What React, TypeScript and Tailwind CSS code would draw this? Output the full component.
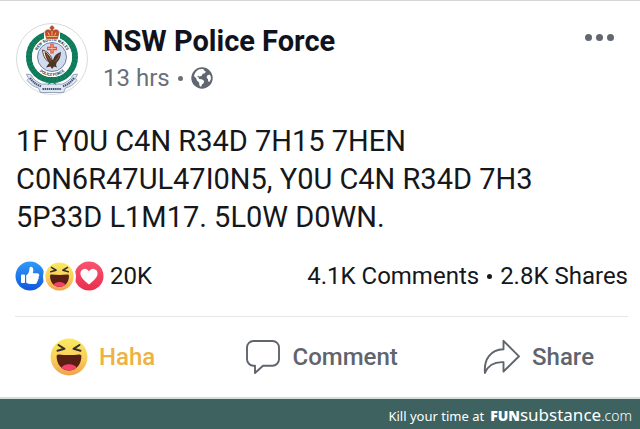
import React from "react";

const HahaIcon = ({ className, id }: { className: string; id: string }) => (
  <svg viewBox="0 0 38 38" className={className} aria-hidden="true">
    <defs>
      <linearGradient id={id} x1="0" y1="0" x2="0" y2="1">
        <stop offset="0" stopColor="#fbe960" />
        <stop offset="0.55" stopColor="#f8cf5c" />
        <stop offset="1" stopColor="#f2a04c" />
      </linearGradient>
    </defs>
    <circle cx="19" cy="19" r="18.5" fill={`url(#${id})`} />
    <path
      d="M8.500 7 14.500 10.800 7.500 12.800M29.500 7 23.500 10.800 30.500 12.800"
      fill="none"
      stroke="#33302c"
      strokeWidth="2"
      strokeLinecap="round"
      strokeLinejoin="round"
    />
    <path
      d="M6.600 18.200C6.600 17 7.400 16.300 8.700 16.400c6.800.8 13.800.8 20.600 0 1.300-.1 2.100.6 2.100 1.800C31.400 26 26.500 32.500 19 32.500S6.600 26 6.600 18.200z"
      fill="#5a1f13"
    />
    <path
      d="M11.500 29.800c.8-2.300 3.800-3.500 7.500-3.500s6.700 1.200 7.500 3.500c-2 1.800-4.500 2.700-7.500 2.700s-5.500-.9-7.500-2.700z"
      fill="#f4416a"
    />
  </svg>
);

const LikeIcon = () => (
  <svg viewBox="0 0 30 30" className="size-[30px]" aria-hidden="true">
    <defs>
      <linearGradient id="like" x1="0" y1="0" x2="0" y2="1">
        <stop offset="0" stopColor="#2f9af8" />
        <stop offset="1" stopColor="#1257dc" />
      </linearGradient>
    </defs>
    <circle cx="15" cy="15" r="14.5" fill="url(#like)" />
    <rect x="6" y="13.500" width="4" height="8.500" rx="0.800" fill="#fff" />
    <path
      d="M11.200 14.200c1.900-1.200 3-3 3.100-5.400 0-1.900.6-3 1.700-3 1.700 0 2.500 1.800 2.300 4-.1.900-.3 1.700-.6 2.500h4.400c1.400 0 2.200.9 2.200 1.900 0 .8-.4 1.400-.9 1.700.4.400.5.900.4 1.400-.1.700-.5 1.100-1 1.400.3.900-.1 1.900-.9 2.200.2 1.200-.6 2-1.900 2h-4.300c-1.700 0-3.100-.4-4.500-1.200z"
      fill="#fff"
    />
  </svg>
);

const LoveIcon = () => (
  <svg viewBox="0 0 30 30" className="size-[30px]" aria-hidden="true">
    <defs>
      <linearGradient id="love" x1="0" y1="0" x2="0" y2="1">
        <stop offset="0" stopColor="#f9536f" />
        <stop offset="1" stopColor="#e92f4e" />
      </linearGradient>
    </defs>
    <circle cx="15" cy="15" r="14.500" fill="url(#love)" />
    <path
      d="M15 10.400c-1.300-2-3.100-2.900-5-2.500-2.500.5-3.900 2.700-3.500 5.300.6 4 4.300 6.800 8.500 10.300 4.200-3.500 7.900-6.300 8.500-10.300.4-2.600-1-4.800-3.500-5.300-1.900-.4-3.700.5-5 2.500z"
      fill="#fff"
    />
  </svg>
);

const GlobeIcon = () => (
  <svg viewBox="0 0 22 22" className="size-[22px]" aria-hidden="true">
    <circle cx="11" cy="11" r="10.700" fill="#616770" />
    <path
      d="M6.500 3.300C8 2.300 10 1.900 12.500 2.200l.8 1.500 1.500.8-.8 1.700-2.200.6-1.300 2.300-2.300.4-1-.9-.8 1.200 1.300.8.4 1.300 2.700.3 2.400 1.700-.6 2.300-1.700 1.300-.8 2.400-1.700-1.300-.3-3-2.200-2-.9-2.700-2-1.600c.3-2.300 1.600-4.500 3.500-6z"
      fill="#fff"
    />
    <path d="M16.200 8.600l2.100-1 1.400 1.400.2 3-1.300 2.700-1.300-.2-.4-2.500-1.300-1.300z" fill="#fff" />
  </svg>
);

const CommentIcon = () => (
  <svg viewBox="0 0 36 36" className="size-9" fill="none" aria-hidden="true">
    <path
      d="M8.500 2h19a6.500 6.500 0 0 1 6.500 6.500v11.700a6.500 6.500 0 0 1-6.500 6.500H18L10 34v-7.300H8.500A6.500 6.500 0 0 1 2 20.200V8.500A6.500 6.500 0 0 1 8.500 2z"
      stroke="#5f646d"
      strokeWidth="1.900"
      strokeLinejoin="round"
    />
  </svg>
);

const ShareIcon = () => (
  <svg viewBox="0 0 37 36" className="h-9 w-[37px]" fill="none" aria-hidden="true">
    <path
      d="M20.500 1.800 36 17.300 20.500 32.500V23.200C11 22.700 5 26.500 1.900 34 .8 20 7.500 10.800 20.500 10.300z"
      stroke="#5f646d"
      strokeWidth="1.900"
      strokeLinejoin="round"
    />
  </svg>
);

const Crest = () => (
  <svg viewBox="0 0 72 72" className="size-[72px] shrink-0" role="img" aria-label="NSW Police Force crest">
    <defs>
      <path id="arcTop" d="M20 34a16 16 0 0 1 32 0" />
      <path id="arcBottom" d="M17 34a19 19 0 0 0 38 0" />
    </defs>
    <circle cx="36" cy="36" r="35.500" fill="#fff" stroke="#d9dadc" />
    {/* wreath */}
    <circle cx="36" cy="34" r="23" fill="none" stroke="#12805f" strokeWidth="6" />
    <circle cx="36" cy="34" r="23" fill="none" stroke="#0b5f49" strokeWidth="6" strokeDasharray="1 3" opacity="0.35" />
    <circle cx="36" cy="34" r="20" fill="#fff" />
    <circle cx="36" cy="34" r="14.500" fill="#cfdcf0" stroke="#5b6386" strokeWidth="0.800" />
    <g fill="#2e3040" fontFamily="Roboto, sans-serif" fontSize="4" fontWeight="700">
      <text textAnchor="middle">
        <textPath href="#arcTop" startOffset="50%">NEW SOUTH WALES</textPath>
      </text>
      <text textAnchor="middle">
        <textPath href="#arcBottom" startOffset="50%">POLICE FORCE</textPath>
      </text>
    </g>
    {/* crown */}
    <path d="M28 3h16v13.500H28z" fill="#fff" />
    <path
      d="M30.500 15.800 29 9.500c0-3 4-3.500 6-1.500V5.500h-1V4.200h1V3h2v1.200h1v1.300h-1V8c2-2 6-1.500 6 1.500l-1.500 6.300z"
      fill="#c8452f"
      stroke="#9a5a30"
      strokeWidth="0.700"
    />
    <path d="M30.500 13.500h11M32 9.500l1.500 3M40 9.500l-1.500 3M36 8v4.500" stroke="#e9bd72" strokeWidth="1" />
    {/* cross */}
    <path d="M34.300 20.500h3.400v3.300h3.300v3.400h-3.300v3.300h-3.400v-3.300H31v-3.400h3.300z" fill="#e2553c" />
    <path d="M36 21.500v8M32 25.500h8" stroke="#f9d4c4" strokeWidth="0.700" />
    {/* eagle */}
    <path d="M26.500 27c4 1 8 4.500 9.500 9l-1.500 4c-4.500-2-7.500-6.500-8-13z" fill="#f3efec" stroke="#68432d" strokeWidth="1" />
    <path
      d="M28.500 28.500c3 1.500 5.500 4.500 6.800 8l1.700.5c1-4 3.500-6.500 8-8-.2 4.500-1.500 8-4.300 10.500l-.7 2.500 1 2.500-3-1-2 2.500-1.500-2.500-4.500 1 2-3 1.500-1.700c-2.500-2.600-4.400-6.300-5-11.300z"
      fill="#4f3222"
    />
    <path d="M30.500 31c1 3 2.500 5.500 4.500 7.500M43.500 31c-1 3.500-2.500 5.500-4.500 7.500" stroke="#9a7050" strokeWidth="0.800" fill="none" />
    {/* ribbon */}
    <path
      d="M10.500 51l4.500.8c2 4.200 5.500 7.200 10.500 9.200h21c5-2 8.500-5 10.500-9.200l4.500-.8-2 4.500 1.500 2c-3 3.500-7 6.500-11.500 7.500l-2 4.500h-23l-2-4.500c-4.500-1-8.500-4-11.500-7.500l1.500-2z"
      fill="#dfe7f2"
      stroke="#7482a4"
      strokeWidth="0.700"
    />
    <path d="M14 55c3 4 6.500 6.800 11 8.300M58 55c-3 4-6.500 6.800-11 8.300M26.500 66h19" stroke="#46547a" strokeWidth="2.200" strokeDasharray="1.500 0.600" fill="none" />
    <path d="M31 55.500h10L38 58l2.500 4L36 59.500 31.500 62 34 58z" fill="#147a58" />
  </svg>
);

const App = () => {
  return (
    <div className="bg-white font-[Roboto,sans-serif] text-[#15171a]">
      <article className="border-t border-b-2 border-t-[#d5d6d8] border-b-[#d3dddd]">
        <header className="flex items-start px-4 pt-[22px]">
          <Crest />
          <div className="ml-[15px] flex-1">
            <h1 className="text-[29px] leading-[36px] font-bold text-[#10131c]">NSW Police Force</h1>
            <div className="flex items-center gap-2 text-[24px] leading-[38px] text-[#6b7078]">
              <a href="#time">13 hrs</a>
              <span className="size-[5px] rounded-full bg-[#6b7078]" />
              <GlobeIcon />
            </div>
          </div>
          <button type="button" aria-label="More options" className="mt-[11px] mr-[10px] flex gap-1">
            <span className="size-[7px] rounded-full bg-[#63676f]" />
            <span className="size-[7px] rounded-full bg-[#63676f]" />
            <span className="size-[7px] rounded-full bg-[#63676f]" />
          </button>
        </header>

        <p className="mt-[25px] px-4 text-[29px] leading-[38px]">
          1F Y0U C4N R34D 7H15 7HEN
          <br />
          C0N6R47UL47I0N5, Y0U C4N R34D 7H3
          <br />
          5P33D L1M17. 5L0W D0WN.
        </p>

        <div className="mr-[12px] ml-[15px] mt-[25px] flex items-center justify-between border-b border-[#e6e7e9] pb-[25px] text-[24px] leading-[30px]">
          <div className="flex items-center">
            <LikeIcon />
            <HahaIcon id="hahaSmall" className="relative z-10 size-[29px] rounded-full ring-2 ring-white" />
            <LoveIcon />
            <span className="ml-[6px]">20K</span>
          </div>
          <div className="flex items-center gap-2">
            <a href="#comments">4.1K Comments</a>
            <span className="size-[5px] rounded-full bg-[#15171a]" />
            <a href="#shares">2.8K Shares</a>
          </div>
        </div>

        <div className="flex items-center justify-between py-[21px] pr-[46px] pl-[50px] text-[24px] leading-[38px] font-medium text-[#5f646d]">
          <button type="button" className="flex items-center gap-[11px] pr-1 text-[#edb240]">
            <HahaIcon id="hahaLarge" className="size-[38px]" />
            Haha
          </button>
          <button type="button" className="flex items-center gap-3">
            <CommentIcon />
            Comment
          </button>
          <button type="button" className="flex items-center gap-3">
            <ShareIcon />
            Share
          </button>
        </div>
      </article>

      <footer className="flex items-baseline justify-end gap-[6px] bg-[#3d625f] pt-[5px] pr-2 pb-1 font-['Noto_Sans',sans-serif] text-[13px] leading-[22px] text-white">
        <span>Kill your time at</span>
        <a href="#home" className="text-[17px]">
          <span className="text-[14px] font-black">FUN</span>
          <span>substance</span>
          <span className="text-[14px] font-light">.com</span>
        </a>
      </footer>
    </div>
  );
};

export default App;
